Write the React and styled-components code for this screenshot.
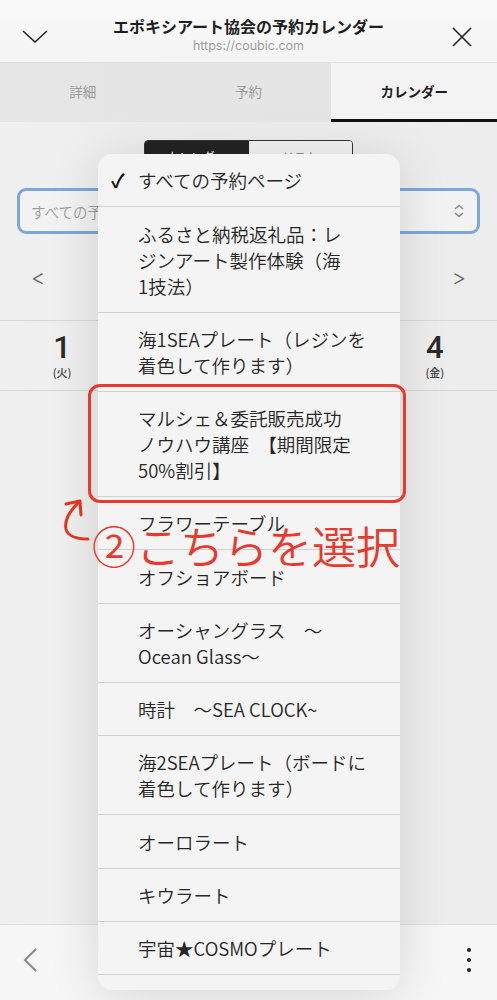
import React from "react";
import styled, { createGlobalStyle } from "styled-components";

const GlobalStyle = createGlobalStyle`
  body {
    margin: 0;
    background: #efefef;
    font-family: "Noto Sans CJK JP", "Noto Sans", sans-serif;
    color: #222;
  }
`;

const menuItems = [
  { lines: ["ふるさと納税返礼品：レ", "ジンアート製作体験（海", "1技法）"] },
  { lines: ["海1SEAプレート（レジンを", "着色して作ります）"] },
  { lines: ["マルシェ＆委託販売成功", "ノウハウ講座　【期間限定", "50%割引】"] },
  { lines: ["フラワーテーブル"] },
  { lines: ["オフショアボード"] },
  { lines: ["オーシャングラス　～", "Ocean Glass～"] },
  { lines: ["時計　～SEA CLOCK~"] },
  { lines: ["海2SEAプレート（ボードに", "着色して作ります）"] },
  { lines: ["オーロラート"] },
  { lines: ["キウラート"] },
  { lines: ["宇宙★COSMOプレート"] },
];

const days = [
  { num: "1", wd: "(火)" },
  { num: "2", wd: "(水)" },
  { num: "3", wd: "(木)" },
  { num: "4", wd: "(金)" },
];

const App = () => {
  return (
    <>
      <GlobalStyle />
      <Screen>
        <Header>
          <IconButton>
            <svg width="26" height="14" viewBox="0 0 26 14">
              <path d="M1 1 L13 12 L25 1" fill="none" stroke="#222" strokeWidth="1.6" />
            </svg>
          </IconButton>
          <TitleBlock>
            <Title>エポキシアート協会の予約カレンダー</Title>
            <Url>https://coubic.com</Url>
          </TitleBlock>
          <IconButton>
            <svg width="20" height="20" viewBox="0 0 20 20">
              <path d="M1 1 L19 19 M19 1 L1 19" fill="none" stroke="#222" strokeWidth="1.6" />
            </svg>
          </IconButton>
        </Header>

        <Tabs>
          <Tab>詳細</Tab>
          <Tab>予約</Tab>
          <Tab $active>カレンダー</Tab>
        </Tabs>

        <Body>
          <Segment>
            <SegButton $on>カレンダー</SegButton>
            <SegButton>リスト</SegButton>
          </Segment>

          <SelectBox>
            <SelectText>すべての予約ページ</SelectText>
            <svg width="12" height="14" viewBox="0 0 12 14">
              <path d="M2 5 L6 1.5 L10 5 M2 9 L6 12.5 L10 9" fill="none" stroke="#888" strokeWidth="1.5" />
            </svg>
          </SelectBox>

          <NavRow>
            <NavArrow>&lt;</NavArrow>
            <NavArrow>&gt;</NavArrow>
          </NavRow>

          <DateRow>
            {days.map((d) => (
              <DateCell key={d.num}>
                <DateNum>{d.num}</DateNum>
                <Weekday>{d.wd}</Weekday>
              </DateCell>
            ))}
          </DateRow>
        </Body>

        <BottomBar>
          <svg width="16" height="26" viewBox="0 0 16 26">
            <path d="M14 2 L3 13 L14 24" fill="none" stroke="#8a8a8a" strokeWidth="2" />
          </svg>
          <Dots>
            <span />
            <span />
            <span />
          </Dots>
        </BottomBar>

        <Menu>
          <MenuItem>
            <Check>✓</Check>
            <ItemText>すべての予約ページ</ItemText>
          </MenuItem>
          {menuItems.map((item, i) => (
            <MenuItem key={i}>
              <ItemText>
                {item.lines.map((l, j) => (
                  <Line key={j}>{l}</Line>
                ))}
              </ItemText>
            </MenuItem>
          ))}
          <MenuTail />
        </Menu>

        <Highlight />
        <Annotation>②こちらを選択</Annotation>
        <Arrow width="40" height="60" viewBox="0 0 40 60">
          <path
            d="M33 47 C22 47 13 45 11 37 C9 28 14 20 23 11"
            fill="none"
            stroke="#e2331f"
            strokeWidth="3"
            strokeLinecap="round"
          />
          <path
            d="M11 12 L25 9 L26 23"
            fill="none"
            stroke="#e2331f"
            strokeWidth="3"
            strokeLinecap="round"
            strokeLinejoin="round"
          />
        </Arrow>
      </Screen>
    </>
  );
};

const Screen = styled.div`
  position: relative;
  width: 497px;
  height: 1000px;
  overflow: hidden;
  display: flex;
  flex-direction: column;
  background: #efefef;
`;

const Header = styled.div`
  height: 62px;
  display: grid;
  grid-template-columns: 70px 1fr 70px;
  align-items: center;
  background: linear-gradient(#fafafa, #f4f4f4);
`;

const IconButton = styled.div`
  display: flex;
  justify-content: center;
  align-items: center;
  padding-top: 12px;
`;

const TitleBlock = styled.div`
  display: flex;
  flex-direction: column;
  align-items: center;
  padding-top: 8px;
`;

const Title = styled.div`
  font-size: 16px;
  font-weight: 700;
  color: #1e1e1e;
  line-height: 22px;
  white-space: nowrap;
`;

const Url = styled.div`
  font-family: "Inter", "Liberation Sans", sans-serif;
  font-size: 12.5px;
  color: #a0a0a0;
  line-height: 18px;
`;

const Tabs = styled.div`
  height: 59px;
  display: grid;
  grid-template-columns: 1fr 1fr 1fr;
  background: linear-gradient(90deg, #e6e6e6, #e4e4e4);
  border-top: 1px solid #e0e0e0;
`;

const Tab = styled.div`
  display: flex;
  align-items: center;
  justify-content: center;
  font-size: 13.5px;
  font-weight: ${(p) => (p.$active ? 700 : 400)};
  color: ${(p) => (p.$active ? "#1e1e1e" : "#9a9a9a")};
  background: ${(p) => (p.$active ? "#f3f3f3" : "transparent")};
  border-bottom: 3px solid ${(p) => (p.$active ? "#111" : "transparent")};
`;

const Body = styled.div`
  flex: 1;
  display: flex;
  flex-direction: column;
  background: linear-gradient(90deg, #f0f0f0, #ececec 50%, #ededed);
`;

const Segment = styled.div`
  align-self: center;
  margin-top: 18px;
  width: 207px;
  height: 30px;
  display: grid;
  grid-template-columns: 1fr 1fr;
  border: 1px solid #333;
  border-radius: 4px;
  overflow: hidden;
`;

const SegButton = styled.div`
  display: flex;
  align-items: center;
  justify-content: center;
  font-size: 12px;
  background: ${(p) => (p.$on ? "#232323" : "#f2f2f2")};
  color: ${(p) => (p.$on ? "#fff" : "#888")};
`;

const SelectBox = styled.div`
  margin: 16px 17px 0;
  height: 40px;
  border: 3px solid #7ba7db;
  border-radius: 9px;
  background: #f2f2f2;
  display: flex;
  align-items: center;
  justify-content: space-between;
  padding: 0 12px 0 11px;
`;

const SelectText = styled.div`
  font-size: 14.5px;
  font-weight: 350;
  color: #9a9a9a;
`;

const NavRow = styled.div`
  height: 86px;
  display: flex;
  align-items: center;
  justify-content: space-between;
  padding: 0 31px 0 31px;
`;

const NavArrow = styled.div`
  font-family: "Inter", "Liberation Sans", sans-serif;
  font-size: 22px;
  font-weight: 300;
  color: #666;
`;

const DateRow = styled.div`
  height: 69px;
  display: grid;
  grid-template-columns: repeat(4, 1fr);
  border-top: 1px solid #d6d6d6;
  border-bottom: 1px solid #d6d6d6;
`;

const DateCell = styled.div`
  display: flex;
  flex-direction: column;
  align-items: center;
  padding-top: 10px;
`;

const DateNum = styled.div`
  font-family: "Roboto", "Liberation Sans", sans-serif;
  font-size: 31px;
  font-weight: 500;
  line-height: 34px;
  color: #2a2a2a;
`;

const Weekday = styled.div`
  font-size: 11px;
  font-weight: 500;
  color: #444;
  line-height: 15px;
`;

const BottomBar = styled.div`
  height: 69px;
  border-top: 1px solid #dcdcdc;
  background: #f6f6f6;
  display: flex;
  align-items: center;
  justify-content: space-between;
  padding: 0 26px 6px 22px;
`;

const Dots = styled.div`
  display: flex;
  flex-direction: column;
  gap: 6px;

  span {
    width: 4px;
    height: 4px;
    border-radius: 50%;
    background: #222;
  }
`;

const Menu = styled.div`
  position: absolute;
  left: 98px;
  top: 154px;
  width: 302px;
  height: 836px;
  background: #f4f4f4;
  border-radius: 14px;
  box-shadow: 0 6px 50px rgba(0, 0, 0, 0.13);
  overflow: hidden;
  display: flex;
  flex-direction: column;
`;

const MenuItem = styled.div`
  position: relative;
  padding: 13.25px 10px 13px 40px;
  border-bottom: 1px solid #cfcfcf;
`;

const Check = styled.span`
  position: absolute;
  left: 13px;
  top: 13px;
  font-size: 19px;
  line-height: 26px;
  font-weight: 700;
  color: #111;
`;

const ItemText = styled.div`
  font-size: 18.5px;
  font-weight: 350;
  line-height: 26px;
  color: #262626;
  white-space: nowrap;
`;

const Line = styled.div``;

const MenuTail = styled.div`
  flex: 1;
`;

const Highlight = styled.div`
  position: absolute;
  left: 88px;
  top: 384px;
  width: 312px;
  height: 113px;
  border: 3px solid #e9392c;
  border-radius: 12px;
`;

const Annotation = styled.div`
  position: absolute;
  left: 92px;
  top: 518px;
  font-size: 44px;
  font-weight: 350;
  line-height: 54px;
  color: #e9392c;
  white-space: nowrap;
`;

const Arrow = styled.svg`
  position: absolute;
  left: 55px;
  top: 492px;
`;

export default App;
